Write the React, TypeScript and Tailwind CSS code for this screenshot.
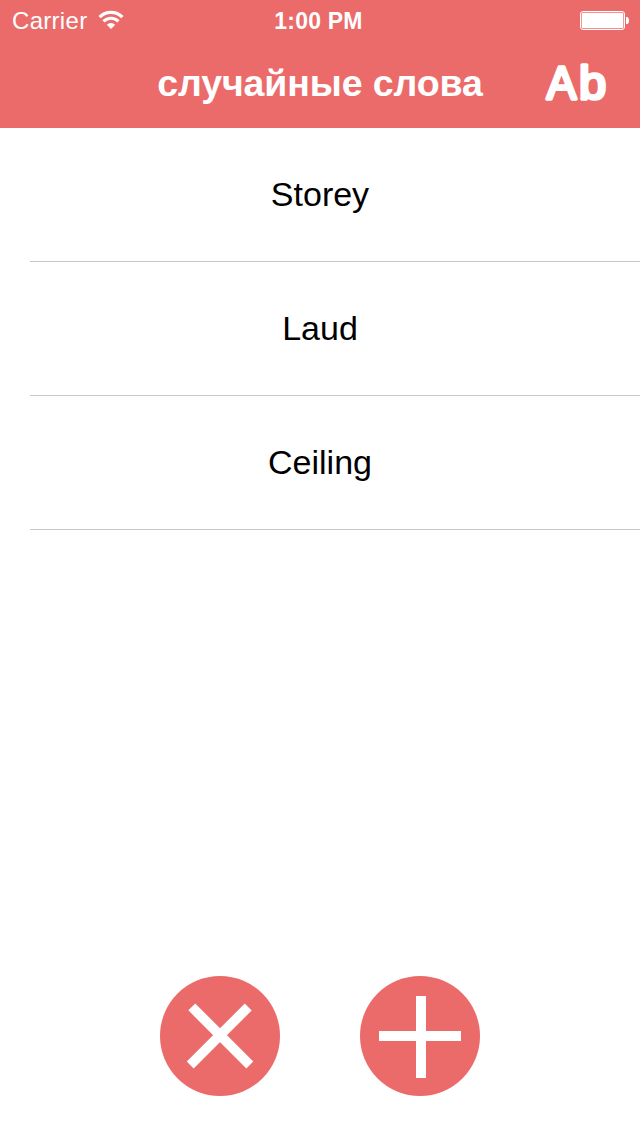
import React from "react";

const words = ["Storey", "Laud", "Ceiling"];

function WifiIcon() {
  return (
    <svg width="26" height="20" viewBox="0 0 26 20" fill="none" stroke="#fff" className="ml-[11px]">
      <path d="M1.6 7.2A16 16 0 0 1 24.4 7.2" strokeWidth="3.3" />
      <path d="M5.5 11.3A10.6 10.6 0 0 1 20.5 11.3" strokeWidth="3.1" />
      <path d="M13 19L8.8 14.8A6 6 0 0 1 17.2 14.8Z" fill="#fff" stroke="none" />
    </svg>
  );
}

function BatteryIcon() {
  return (
    <svg width="50" height="20" viewBox="0 0 50 20">
      <rect x="0.5" y="1.5" width="44" height="18" rx="2.5" fill="none" stroke="#fff" />
      <rect x="1.7" y="2.7" width="41.6" height="15.6" rx="1.3" fill="#fff" />
      <path d="M46 7H47.5Q49 8 49 10.5T47.5 14H46Z" fill="#fff" />
    </svg>
  );
}

export default function App() {
  return (
    <div className="flex h-[1136px] w-[640px] flex-col overflow-hidden bg-white font-['Liberation_Sans',sans-serif]">
      <header className="h-32 bg-[#eb6b6a] text-white">
        <div className="grid h-[38px] grid-cols-3 items-center">
          <div className="flex items-center pl-3 text-2xl leading-[38px] tracking-[0.3px]">
            <span className="pt-[2px]">Carrier</span>
            <WifiIcon />
          </div>
          <div className="pt-[2px] pr-[3px] text-center text-[23px] leading-[38px] font-bold tracking-[0.2px]">1:00 PM</div>
          <div className="flex justify-end pr-[10px]">
            <BatteryIcon />
          </div>
        </div>
        <div className="grid h-[90px] grid-cols-[140px_360px_140px]">
          <div />
          <h1 className="text-center text-[37.5px] leading-[90px] font-bold tracking-[-0.1px] whitespace-nowrap">случайные слова</h1>
          <button aria-label="Ab" className="pl-10">
            <svg width="72" height="90" viewBox="0 0 72 90">
              <g fontSize="47" fill="#fff" stroke="#fff" strokeWidth="3.4" strokeLinejoin="round">
                <text x="6.7" y="61" textLength="29.5" lengthAdjust="spacingAndGlyphs">A</text>
                <text x="39" y="61" textLength="27.2" lengthAdjust="spacingAndGlyphs">b</text>
              </g>
            </svg>
          </button>
        </div>
      </header>
      <ul className="flex-1">
        {words.map((word) => (
          <li key={word} className="h-[134px] pl-[30px]">
            <div className="h-full border-b border-[#c8c7cc] pr-[30px] text-center text-[34px] leading-[132px] text-black">{word}</div>
          </li>
        ))}
      </ul>
      <footer className="flex justify-center gap-20 pb-10">
        <button aria-label="Clear" className="size-[120px] rounded-full bg-[#eb6b6a]">
          <svg width="120" height="120" viewBox="0 0 120 120" stroke="#fff" strokeWidth="9.8">
            <path d="M31.8 30.9L89.8 89M88.2 31L30.2 89" />
          </svg>
        </button>
        <button aria-label="Add" className="size-[120px] rounded-full bg-[#eb6b6a]">
          <svg width="120" height="120" viewBox="0 0 120 120" fill="#fff">
            <path d="M56 20h10v82H56zM19 55h82v10H19z" />
          </svg>
        </button>
      </footer>
    </div>
  );
}
